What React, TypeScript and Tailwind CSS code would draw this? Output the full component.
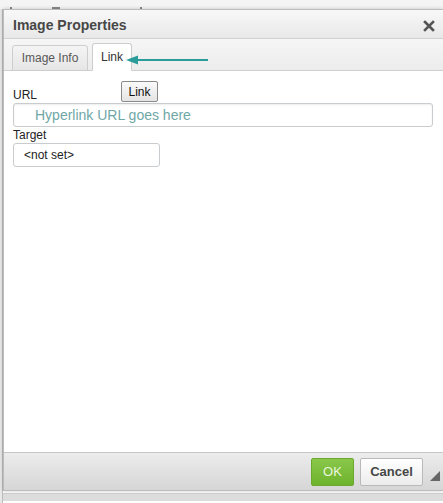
import React from "react";

export default function App() {
  const font = { fontFamily: '"Liberation Sans", Arial, sans-serif' };
  return (
    <div className="relative w-[443px] h-[503px] overflow-hidden bg-white" style={font}>
      {/* underlying page strip */}
      <div className="h-[9px] bg-[#f4f4f4] flex items-end text-[#555] text-[10px] leading-none pl-[10px] gap-[40px]">
        <span className="h-[2px] w-[2px] bg-[#888]"></span>
        <span className="h-[2px] w-[8px] bg-[#888]"></span>
        <span className="h-[2px] w-[2px] bg-[#888] ml-[40px]"></span>
      </div>
      <div className="flex">
        <div className="w-[3px] bg-[#e8e8e8] border-r border-[#bbb]"></div>
        <div className="flex flex-col w-[440px] h-[482px] border border-[#bcbcbc] border-r-0 shadow-[0_0_4px_rgba(0,0,0,0.2)]">
          {/* title */}
          <div className="h-[29px] flex items-center justify-between pl-[9px] pr-[8px] pt-[3px] bg-gradient-to-b from-[#f8f8f8] to-[#e8e8e8] border-b border-[#d1d1d1]">
            <span className="text-[14px] font-bold text-[#474747]">Image Properties</span>
            <svg width="12" height="12" viewBox="0 0 12 12">
              <path d="M2 2 L10 10 M10 2 L2 10" stroke="#555" strokeWidth="2.6" strokeLinecap="square" />
            </svg>
          </div>
          {/* tabs */}
          <div className="h-[32px] flex items-end pl-[8px] gap-[4px] bg-gradient-to-b from-[#f6f6f6] to-[#ececec] border-b border-[#cfcfcf]">
            <div className="h-[26px] w-[76px] mb-[-1px] flex items-center justify-center text-[12px] text-[#595959] bg-gradient-to-b from-[#f4f4f4] to-[#e6e6e6] border border-[#cdcdcd] rounded-t-[3px]">
              Image Info
            </div>
            <div className="h-[28px] w-[40px] mb-[-1px] flex items-center justify-center text-[12px] text-[#333] bg-white border border-[#cdcdcd] border-b-white rounded-t-[3px]">
              Link
            </div>
          </div>
          {/* content */}
          <div className="flex-1 bg-white relative pl-[9px] pr-[9px] pt-[17px]">
            <div className="text-[12px] text-[#222] leading-[14px]">URL</div>
            <div className="mt-[1px] h-[24px] w-[420px] border border-[#c9cccf] rounded-[3px] shadow-[inset_0_1px_2px_rgba(0,0,0,0.08)] flex items-center pl-[21px] text-[14px] text-[#6fa7a7]">
              Hyperlink URL goes here
            </div>
            <div className="mt-[1px] text-[12px] text-[#222] leading-[14px]">Target</div>
            <div className="mt-[1px] h-[24px] w-[147px] border border-[#c9cccf] rounded-[3px] flex items-center pl-[10px] text-[12px] text-[#222]">
              &lt;not set&gt;
            </div>
            {/* tooltip */}
            <div className="absolute left-[117px] top-[10px] h-[21px] w-[37px] rounded-[2px] border border-[#8a8a8a] bg-gradient-to-b from-[#fafafa] to-[#e4e4e4] flex items-center justify-center text-[12px] text-[#111]">
              Link
            </div>
          </div>
          {/* footer */}
          <div className="h-[38px] flex items-center justify-end gap-[6px] pr-[20px] bg-gradient-to-b from-[#ececec] to-[#d6d6d6] border-t border-[#c6c6c6] relative">
            <div className="h-[28px] w-[43px] rounded-[2px] border border-[#6aa92e] bg-gradient-to-b from-[#8ac74a] to-[#6db32c] flex items-center justify-center text-[13px] text-[#eaf7dc]">
              OK
            </div>
            <div className="h-[28px] w-[63px] rounded-[2px] border border-[#b9b9b9] bg-gradient-to-b from-[#ffffff] to-[#ececec] flex items-center justify-center text-[13px] font-bold text-[#474747]">
              Cancel
            </div>
            <svg className="absolute right-[3px] bottom-[9px]" width="10" height="10" viewBox="0 0 10 10">
              <path d="M10 0 L10 10 L0 10 Z" fill="#666" />
            </svg>
          </div>
        </div>
      </div>
      {/* underlying page below */}
      <div className="flex h-[12px]">
        <div className="w-[3px] bg-[#e8e8e8] border-r border-[#bbb]"></div>
        <div className="flex-1 mt-[2px] h-[8px] bg-[#dcdcdc] border-t border-[#ccc]"></div>
      </div>
      {/* arrow annotation */}
      <svg className="absolute left-[126px] top-[54px]" width="84" height="12" viewBox="0 0 84 12">
        <line x1="6" y1="6" x2="82" y2="6" stroke="#2a9d9a" strokeWidth="2" />
        <path d="M0 6 L12 1.5 L12 10.5 Z" fill="#2a9d9a" />
      </svg>
    </div>
  );
}
